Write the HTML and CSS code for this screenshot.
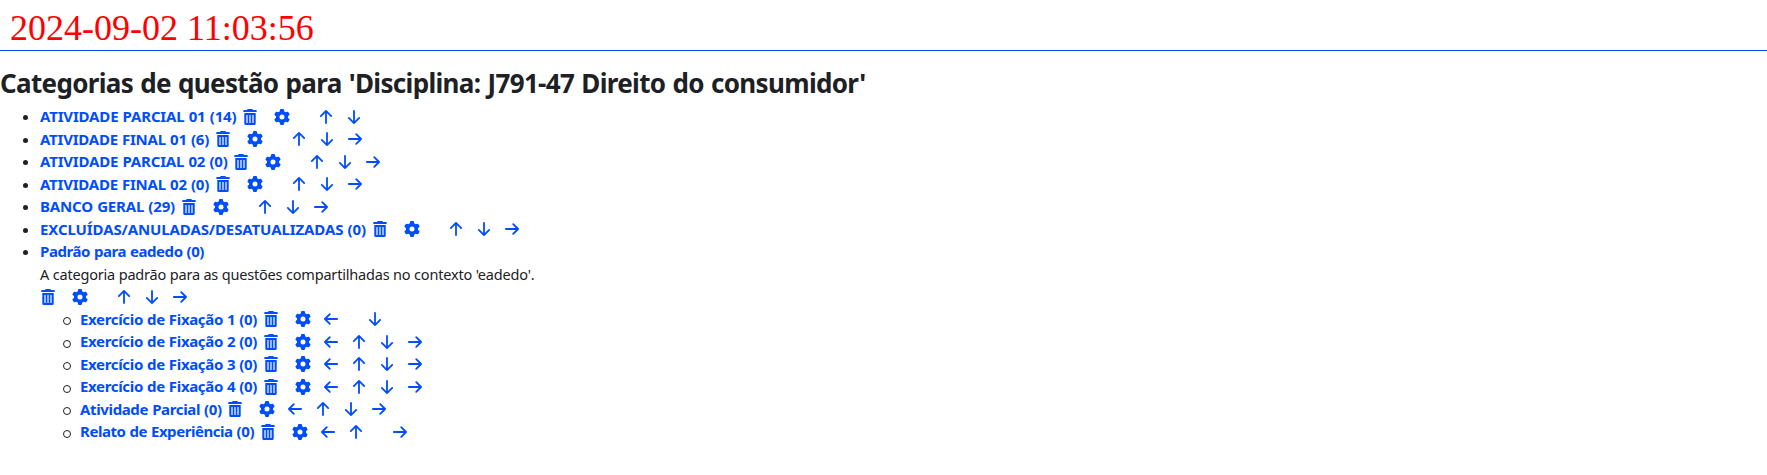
FILE: index.html
```
<!DOCTYPE html>
<html lang="pt-BR">
<head>
<meta charset="utf-8">
<title>Categorias de questão</title>
<link rel="stylesheet" href="styles.css">
</head>
<body>
<svg class="sprite" aria-hidden="true">
  <symbol id="trash" viewBox="0 0 16 16"><path fill="currentColor" fill-rule="evenodd" d="M5.800 0h4.400l.9 1H14a.7.7 0 0 1 .7.7V3H1.300V1.700A.7.7 0 0 1 2 1h2.900zM2.300 4h11.400v10.500a1.500 1.500 0 0 1-1.500 1.500H3.800a1.500 1.500 0 0 1-1.500-1.500zM4.400 6v8h1.200V6zM7.400 6v8h1.200V6zM10.400 6v8h1.200V6z"/></symbol>
  <symbol id="gear" viewBox="0 0 512 512"><path fill="currentColor" d="M495.900 166.600c3.200 8.700 .5 18.400-6.400 24.600l-43.300 39.400c1.100 8.300 1.700 16.800 1.700 25.400s-.6 17.100-1.700 25.400l43.300 39.400c6.900 6.200 9.600 15.900 6.400 24.600c-4.400 11.900-9.700 23.300-15.800 34.300l-4.700 8.100c-6.600 11-14 21.400-22.100 31.200c-5.900 7.200-15.700 9.600-24.500 6.800l-55.700-17.700c-13.400 10.300-28.200 18.900-44 25.400l-12.500 57.100c-2 9.100-9 16.300-18.200 17.800c-13.800 2.300-28 3.500-42.500 3.500s-28.700-1.200-42.500-3.500c-9.200-1.500-16.200-8.700-18.200-17.800l-12.500-57.100c-15.800-6.500-30.600-15.100-44-25.400L83.100 425.900c-8.800 2.800-18.600 .3-24.500-6.800c-8.100-9.800-15.500-20.200-22.100-31.200l-4.700-8.100c-6.100-11-11.400-22.400-15.800-34.300c-3.200-8.700-.5-18.400 6.400-24.600l43.300-39.400C64.600 273.100 64 264.600 64 256s.6-17.100 1.700-25.400L22.400 191.200c-6.900-6.200-9.600-15.900-6.400-24.600c4.400-11.900 9.700-23.300 15.800-34.300l4.700-8.100c6.600-11 14-21.400 22.100-31.200c5.900-7.200 15.700-9.600 24.500-6.800l55.700 17.700c13.400-10.300 28.200-18.900 44-25.400l12.500-57.100c2-9.100 9-16.300 18.200-17.800C227.300 1.200 241.500 0 256 0s28.700 1.200 42.500 3.500c9.200 1.500 16.200 8.700 18.200 17.800l12.500 57.100c15.800 6.500 30.600 15.100 44 25.400l55.700-17.700c8.800-2.800 18.600-.3 24.500 6.800c8.100 9.800 15.500 20.200 22.100 31.200l4.700 8.100c6.100 11 11.400 22.400 15.800 34.300zM256 336a80 80 0 1 0 0-160 80 80 0 1 0 0 160z"/></symbol>
  <symbol id="right" viewBox="0 0 16 16"><path class="stroke" d="M1.900 8h12.200M9.200 3.100 14.100 8 9.200 12.900"/></symbol>
  <symbol id="left" viewBox="0 0 16 16"><path class="stroke" d="M14.100 8H1.900M6.800 3.100 1.900 8 6.800 12.900"/></symbol>
  <symbol id="up" viewBox="0 0 16 16"><path class="stroke" d="M8 14.100V1.900M2.800 7.100 8 1.900l5.200 5.200"/></symbol>
  <symbol id="down" viewBox="0 0 16 16"><path class="stroke" d="M8 1.900v12.200M2.800 8.900 8 14.100l5.200-5.200"/></symbol>
</svg>
<header class="clock">2024-09-02 11:03:56</header>
<main>
<h2 class="title">Categorias de questão para 'Disciplina: J791-47 Direito do consumidor'</h2>
<ul class="list">
<li class="row"><a class="name parcial1">ATIVIDADE PARCIAL 01 (14)</a><span class="actions"><svg class="del"><use href="#trash"/></svg><svg><use href="#gear"/></svg><i></i><svg><use href="#up"/></svg><svg><use href="#down"/></svg></span></li>
<li class="row"><a class="name final">ATIVIDADE FINAL 01 (6)</a><span class="actions"><svg class="del"><use href="#trash"/></svg><svg><use href="#gear"/></svg><i></i><svg><use href="#up"/></svg><svg><use href="#down"/></svg><svg><use href="#right"/></svg></span></li>
<li class="row"><a class="name parcial2">ATIVIDADE PARCIAL 02 (0)</a><span class="actions"><svg class="del"><use href="#trash"/></svg><svg><use href="#gear"/></svg><i></i><svg><use href="#up"/></svg><svg><use href="#down"/></svg><svg><use href="#right"/></svg></span></li>
<li class="row"><a class="name final">ATIVIDADE FINAL 02 (0)</a><span class="actions"><svg class="del"><use href="#trash"/></svg><svg><use href="#gear"/></svg><i></i><svg><use href="#up"/></svg><svg><use href="#down"/></svg><svg><use href="#right"/></svg></span></li>
<li class="row"><a class="name banco">BANCO GERAL (29)</a><span class="actions"><svg class="del"><use href="#trash"/></svg><svg><use href="#gear"/></svg><i></i><svg><use href="#up"/></svg><svg><use href="#down"/></svg><svg><use href="#right"/></svg></span></li>
<li class="row"><a class="name excluidas">EXCLUÍDAS/ANULADAS/DESATUALIZADAS (0)</a><span class="actions"><svg class="del"><use href="#trash"/></svg><svg><use href="#gear"/></svg><i></i><svg><use href="#up"/></svg><svg><use href="#down"/></svg><svg><use href="#right"/></svg></span></li>
<li class="row"><a class="name padrao">Padrão para eadedo (0)</a></li>
</ul>
<div class="details">
<p class="info">A categoria padrão para as questões compartilhadas no contexto 'eadedo'.</p>
<div class="toolbar"><span class="actions"><svg class="del"><use href="#trash"/></svg><svg><use href="#gear"/></svg><i></i><svg><use href="#up"/></svg><svg><use href="#down"/></svg><svg><use href="#right"/></svg></span></div>
<ul class="list sub">
<li class="row"><a class="name exercicio">Exercício de Fixação 1 (0)</a><span class="actions"><svg class="del"><use href="#trash"/></svg><svg><use href="#gear"/></svg><svg><use href="#left"/></svg><i></i><svg><use href="#down"/></svg></span></li>
<li class="row"><a class="name exercicio">Exercício de Fixação 2 (0)</a><span class="actions"><svg class="del"><use href="#trash"/></svg><svg><use href="#gear"/></svg><svg><use href="#left"/></svg><svg><use href="#up"/></svg><svg><use href="#down"/></svg><svg><use href="#right"/></svg></span></li>
<li class="row"><a class="name exercicio">Exercício de Fixação 3 (0)</a><span class="actions"><svg class="del"><use href="#trash"/></svg><svg><use href="#gear"/></svg><svg><use href="#left"/></svg><svg><use href="#up"/></svg><svg><use href="#down"/></svg><svg><use href="#right"/></svg></span></li>
<li class="row"><a class="name exercicio">Exercício de Fixação 4 (0)</a><span class="actions"><svg class="del"><use href="#trash"/></svg><svg><use href="#gear"/></svg><svg><use href="#left"/></svg><svg><use href="#up"/></svg><svg><use href="#down"/></svg><svg><use href="#right"/></svg></span></li>
<li class="row"><a class="name atividade">Atividade Parcial (0)</a><span class="actions"><svg class="del"><use href="#trash"/></svg><svg><use href="#gear"/></svg><svg><use href="#left"/></svg><svg><use href="#up"/></svg><svg><use href="#down"/></svg><svg><use href="#right"/></svg></span></li>
<li class="row"><a class="name relato">Relato de Experiência (0)</a><span class="actions"><svg class="del"><use href="#trash"/></svg><svg><use href="#gear"/></svg><svg><use href="#left"/></svg><svg><use href="#up"/></svg><i></i><svg><use href="#right"/></svg></span></li>
</ul>
</div>
</main>
</body>
</html>
```
FILE: styles.css
```
* { box-sizing: border-box; }
body { margin: 0; background: #fff; color: #1d2125; font: 15px/22.5px "Noto Sans", sans-serif; }
.sprite { display: none; }
.stroke { fill: none; stroke: currentColor; stroke-width: 1.8; stroke-linecap: round; stroke-linejoin: round; }
.clock { height: 51px; padding: 8px 10px 0; border-bottom: 1px solid #004cff; color: #f00; font: 36px/41px "Liberation Serif", serif; }
.title { margin: 16px 0 6.3px; font-size: 26px; font-weight: 700; line-height: 32px; letter-spacing: -0.66px; word-spacing: 1px; white-space: nowrap; }
.list { margin: 0; padding: 0 0 0 40px; list-style: none; }
.row { position: relative; display: flex; align-items: center; gap: 5.5px; height: 22.5px; white-space: nowrap; }
.row::before { content: ""; position: absolute; left: -17px; top: 10px; width: 5px; height: 5px; border-radius: 50%; background: #1d2125; }
.sub .row::before { width: 6px; height: 6px; top: 9.5px; background: none; border: 1px solid #1d2125; }
.name { color: #004cff; font-weight: 700; word-spacing: 0.5px; }
.parcial1 { letter-spacing: -0.165px; }
.final { letter-spacing: -0.227px; }
.parcial2 { letter-spacing: -0.18px; }
.banco { letter-spacing: -0.17px; }
.excluidas { letter-spacing: -0.105px; }
.padrao { letter-spacing: -0.436px; }
.exercicio { letter-spacing: -0.335px; }
.atividade { letter-spacing: -0.36px; }
.relato { letter-spacing: -0.444px; }
.details { padding-left: 40px; }
.info { margin: 0; font-size: 14.5px; letter-spacing: -0.185px; }
.actions { display: inline-flex; gap: 12px; color: #004cff; }
.actions svg { display: block; width: 16px; height: 16px; }
.actions .del { margin-right: 4px; }
.actions i { width: 4px; }
.toolbar { display: flex; align-items: center; height: 22.5px; }
```
